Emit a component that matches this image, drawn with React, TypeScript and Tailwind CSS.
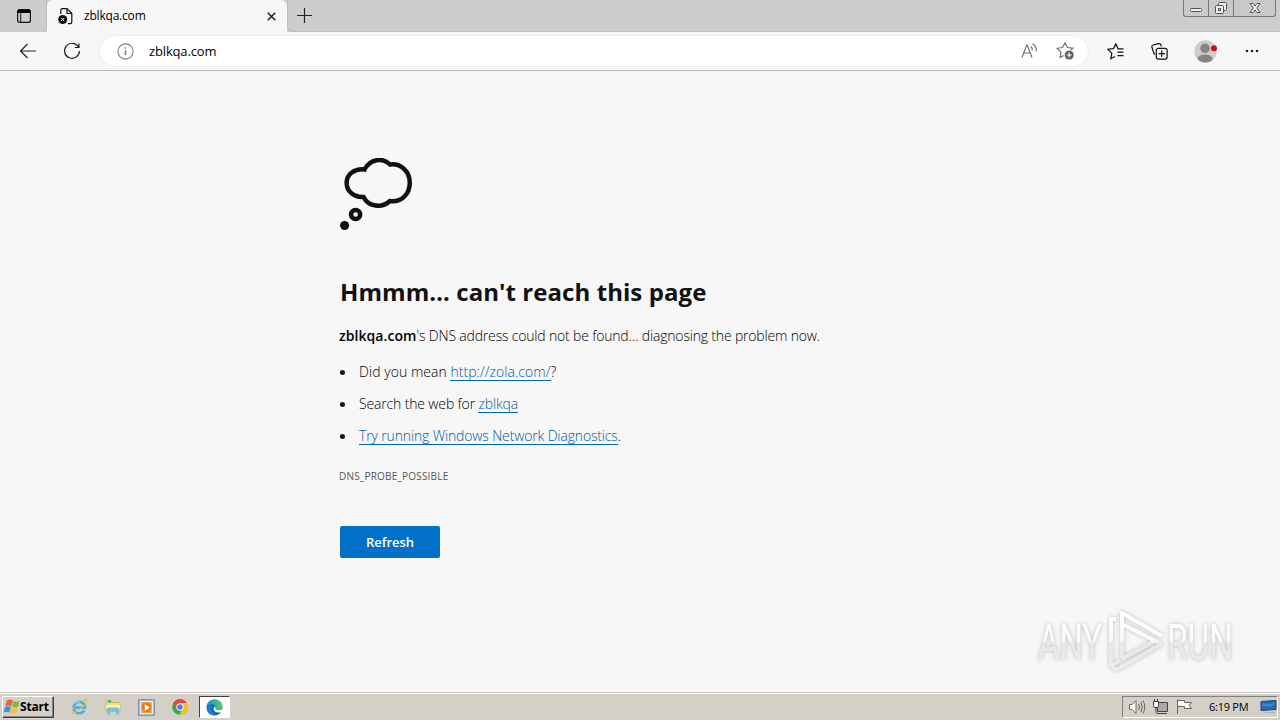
import React from 'react';

const BackIcon = () => (
  <svg width="18" height="16" viewBox="0 0 18 16" fill="none" stroke="#222" strokeWidth="1.2">
    <path d="M17 8H1.5M8.5 1 1.5 8l7 7" />
  </svg>
);

const ReloadIcon = () => (
  <svg width="18" height="18" viewBox="0 0 18 18" fill="none" stroke="#222" strokeWidth="1.2">
    <path d="M15.6 5.2A7.5 7.5 0 1 0 16.5 9M16 1.5v4h-4.2" />
  </svg>
);

const TabActionsIcon = () => (
  <svg width="14" height="14" viewBox="0 0 14 14">
    <rect x=".6" y=".6" width="12.8" height="12.8" rx="2" fill="none" stroke="#111" strokeWidth="1.2" />
    <path d="M.6 4V2.5Q.6.6 2.5.6h9q1.9 0 1.9 1.9V4z" fill="#000" />
    <path d="M3.7 4v9" stroke="#111" strokeWidth="1" />
  </svg>
);

const BrokenPageIcon = () => (
  <svg width="16" height="17" viewBox="0 0 16 17" fill="none">
    <path d="M2.8 6V2.3Q2.8.7 4.4.7H9l4.8 4.8v8.6q0 1.6-1.6 1.6H10M9 .7v4.8h4.8" stroke="#111" strokeWidth="1.2" />
    <circle cx="4.7" cy="11.5" r="4.5" fill="#111" />
    <path d="m3.2 10 3 3m0-3-3 3" stroke="#fff" strokeWidth="1" />
  </svg>
);

const InfoIcon = () => (
  <svg width="17" height="17" viewBox="0 0 17 17" fill="none" stroke="#808080">
    <circle cx="8.5" cy="8.5" r="7.6" strokeWidth="1.1" />
    <path d="M8.5 7.2v5M8.5 4.3v1.5" strokeWidth="1.5" />
  </svg>
);

const ReadAloudIcon = () => (
  <svg width="17" height="16" viewBox="0 0 17 16" fill="none" stroke="#6c6c6c" strokeWidth="1.1">
    <path d="M1 14.5 5.7 2h.5L11 14.5M2.8 10h6.4M9.8 3.5q1.7 1.4 1.5 4M11.4 .8q4.4 2.6 4 7.4" />
  </svg>
);

const AddFavoriteIcon = () => (
  <svg width="19" height="18" viewBox="0 0 19 18" fill="none" stroke="#686868" strokeWidth="1.1">
    <path d="M14.7 7.8 17 6.2l-5.5-.7L9 .9 6.5 5.5 1.2 6.3 5 10.1l-.9 5.5 3.7-2" />
    <circle cx="13.2" cy="13" r="4.5" fill="#5f5f5f" stroke="none" />
    <path d="M13.2 10.5v5M10.7 13h5" stroke="#fff" />
  </svg>
);

const FavoritesIcon = () => (
  <svg width="18" height="17" viewBox="0 0 18 17" fill="none" stroke="#111" strokeWidth="1.2">
    <path d="M12.8 5.8h-1.7L8.8.9 6.5 5.6.9 6.2l3.9 3.9-1 5.6 4-2.2M11 5.8h5.5M10.5 9.2h6M10.5 12.6h6" />
  </svg>
);

const CollectionsIcon = () => (
  <svg width="17" height="17" viewBox="0 0 17 17" fill="none" stroke="#111" strokeWidth="1.2">
    <path d="M4 11.5Q3 11 2.6 9.5L.9 4.1Q.5 2.4 2.2 2L7.8.7Q9.5.4 10 2l.3 1.5" />
    <rect x="5.3" y="5.3" width="10.8" height="10.8" rx="2" />
    <path d="M10.7 7.5v6.4M7.5 10.7h6.4" />
  </svg>
);

const ProfileIcon = () => (
  <svg width="23" height="23" viewBox="0 0 23 23">
    <defs>
      <clipPath id="avatar"><circle cx="11.5" cy="11.5" r="11" /></clipPath>
    </defs>
    <circle cx="11.5" cy="11.5" r="11.2" fill="#cfcdcb" />
    <g clipPath="url(#avatar)" fill="#858383">
      <circle cx="11" cy="8.3" r="4.8" />
      <ellipse cx="11" cy="18.8" rx="7.5" ry="4.3" />
    </g>
    <circle cx="20" cy="8.3" r="3" fill="#d80a17" />
  </svg>
);

const ThoughtIcon = () => (
  <svg width="74" height="74" viewBox="0 0 74 74" fill="none" stroke="#111" strokeWidth="4.5">
    <path d="M24.5 11.5C30 1-42.5 1 24.5 11.5Z" stroke="none" />
    <path d="M24.5 11.5C30 1 42.5-1 50 6.5 61 5 69.8 13.5 69.8 24.8 69.8 36.5 61 44.5 50 43 42 50.5 28.5 49 23.5 39 14 39.5 6.6 33.5 6.6 24.8 6.6 16 14.5 10.5 24.5 11.5Z" />
    <circle cx="15.6" cy="56.5" r="4.6" />
    <circle cx="4.6" cy="67.5" r="4.5" fill="#111" stroke="none" />
  </svg>
);

const WindowButtons = () => (
  <div className="flex h-[17px] w-[93px] rounded-b-[3px] border border-t-0 border-[#777] bg-[#c9c9c9]">
    <div className="flex w-[25px] justify-center border-r border-[#777]">
      <svg width="14" height="16" viewBox="0 0 14 16"><rect x="1.5" y="8.5" width="11" height="3" rx="1" fill="#eee" stroke="#555" /></svg>
    </div>
    <div className="flex w-[25px] justify-center border-r border-[#777]">
      <svg width="14" height="16" viewBox="0 0 14 16" fill="#eee" stroke="#555">
        <rect x="4.5" y="2.5" width="8" height="8" rx="1" />
        <rect x="1.5" y="5.5" width="8" height="8" rx="1" />
        <rect x="4.5" y="8.5" width="2" height="2" />
      </svg>
    </div>
    <div className="flex flex-1 justify-center">
      <svg width="14" height="16" viewBox="0 0 14 16"><path d="M2 3.5h3L7 6l2-2.5h3L8.8 8l3.2 4.5H9L7 10l-2 2.5H2L5.2 8z" fill="#eee" stroke="#555" /></svg>
    </div>
  </div>
);

const Watermark = () => (
  <div className="absolute left-[1036px] top-[606px] drop-shadow-[0_0_2px_rgba(0,0,0,0.24)]">
    <svg className="overflow-visible" width="204" height="74" viewBox="0 0 204 74" fill="none">
      <defs>
        <linearGradient id="mark" x1="0" y1="10" x2="0" y2="60" gradientUnits="userSpaceOnUse">
          <stop offset="0" stopColor="#fff" />
          <stop offset=".5" stopColor="#fafafa" />
          <stop offset=".54" stopColor="#e8e8e8" />
          <stop offset="1" stopColor="#ebebeb" />
        </linearGradient>
      </defs>
      <text x="2" y="54" textLength="64" lengthAdjust="spacingAndGlyphs" fill="url(#mark)" fontFamily="Roboto" fontSize="50">ANY</text>
      <text x="131" y="54" textLength="66" lengthAdjust="spacingAndGlyphs" fill="url(#mark)" fontFamily="Roboto" fontSize="50">RUN</text>
      <path d="M86 52V7l40 23M80 13h-5v46l9-4M86 18l39 20-45 26-5-5M86 53l33-18" stroke="url(#mark)" strokeWidth="3.8" strokeLinejoin="round" />
    </svg>
  </div>
);

const StartFlag = () => (
  <svg width="17" height="16" viewBox="0 0 17 16">
    <path d="M4 1.5q3-2 6 0L8.3 7.3q-3-1.8-6 0z" fill="#ed6332" />
    <path d="M10.8 1.8q2.6 1.7 5.7.2L15 7.7q-3 1.4-6-.1z" fill="#78b842" />
    <path d="M2 8.2q3-1.8 6 0l-1.6 5.5q-3-1.8-6 0z" fill="#3993dd" />
    <path d="M8.8 8.5q3 1.7 6 .2l-1.5 5.5q-3 1.4-6-.1z" fill="#f8bf37" />
  </svg>
);

const ExplorerIcon = () => (
  <svg width="18" height="18" viewBox="0 0 18 18" fill="none">
    <path d="M14.3 12.3A5.7 5.7 0 1 1 15 9.6H4" stroke="#4aaee6" strokeWidth="2.6" />
    <path d="M12 3.5q4.5-3.2 4.8-1Q16.5 6 10 11T2 15.5Q.8 13.5 4 9" stroke="#e6bd45" strokeWidth="1.2" />
    <path d="M4 6q2-3 6-2" stroke="#a5e0f7" />
  </svg>
);

const FolderIcon = () => (
  <svg width="18" height="18" viewBox="0 0 18 18">
    <path d="M2 2.5h5l1 2h8v9H2z" fill="#f2dc8a" stroke="#d2b75f" />
    <path d="M4 2h3v3H4z" fill="#63ae69" />
    <path d="M2 7h14v3H2z" fill="#fff0b4" />
    <path d="M3 16.5v-5q0-2 2-2h8q2 0 2 2v5h-3v-3.5H6v3.5z" fill="#79bfe2" />
  </svg>
);

const MediaIcon = () => (
  <svg width="17" height="17" viewBox="0 0 17 17">
    <rect x=".7" y=".7" width="15.6" height="15.6" fill="#a9d4ef" stroke="#6487aa" />
    <rect x="2.8" y="2.5" width="11.5" height="12" fill="#f9a23c" stroke="#e8f5fc" />
    <circle cx="8.5" cy="8.5" r="4.8" fill="#ee7710" />
    <path d="m6.8 5 5 3.5-5 3.5z" fill="#fff" />
  </svg>
);

const ChromeIcon = () => (
  <svg width="16" height="16" viewBox="0 0 16 16">
    <circle cx="8" cy="8" r="7.8" fill="#35a853" />
    <path d="M1.3 4A7.8 7.8 0 0 1 14.8 4H8L5 10z" fill="#e94435" />
    <path d="M14.8 4A7.8 7.8 0 0 1 7.5 15.8L11.3 8 9 4z" fill="#fbc116" />
    <circle cx="8" cy="8" r="3.7" fill="#fff" />
    <circle cx="8" cy="8" r="2.8" fill="#4285e8" />
  </svg>
);

const EdgeIcon = () => (
  <svg width="17" height="17" viewBox="0 0 17 17">
    <defs>
      <linearGradient id="edge" x1="0" x2="1">
        <stop stopColor="#168dd9" />
        <stop offset="1" stopColor="#58cf65" />
      </linearGradient>
    </defs>
    <circle cx="8.5" cy="8.5" r="8" fill="#126bb9" />
    <path d="M.5 8C1 2.8 4.6.5 8.5.5c4.7 0 8 3.3 8 6.5 0 3-2.2 4-4.6 4-2 0-2.6-.7-2.2-1.5C10.5 7 8.3 5.2 6 5.2 3.3 5.2 1.3 6.5.5 8z" fill="url(#edge)" />
    <path d="M9.7 9.6q-.8 1.6 2.2 1.7 2.5 0 4.8-1v2.5q-2.5 1.2-5.8.5Q7.7 12.5 7.6 9.5 8 7.2 9.3 7.8z" fill="#fff" />
    <path d="M1 8q2-2.8 5-1-2.5 3 .3 6.5 1.5 2 4 2.5Q2 18 1 8z" fill="#1a80cf" />
  </svg>
);

const TrayIcons = () => (
  <svg width="66" height="18" viewBox="0 0 66 18" fill="#fbfbf8" stroke="#666" strokeWidth="1">
    <path d="M1.5 6.5H4l4-4v13l-4-4H1.5z" />
    <path d="M10.5 6q2 3 0 6M12.8 4q3 5 0 10M15 2.5q3.5 6.5 0 13" fill="none" />
    <path d="M29.5 4.5h10v9h-10z" fill="#aaa" stroke="#444" />
    <path d="M31 15.5h8" stroke="#444" />
    <path d="M25.5 3.5h5v4q0 2-1.5 2h-2q-1.5 0-1.5-2zM26.5 1v3M29.5 1v3" stroke="#444" />
    <path d="M28 10v4q0 1.5 2 1.5h2" fill="none" stroke="#444" />
    <path d="M49.5 1.5v14.5M49.5 2.5h7v2h7l-2.5 3 2.5 3h-7v-2h-7z" />
  </svg>
);

const DesktopIcon = () => (
  <svg width="17" height="14" viewBox="0 0 17 14">
    <path d="M1 1.5 16 .5v9L1 10.5z" fill="#2769b3" stroke="#174878" />
    <path d="M2 3Q9 5.5 15 1.8v3Q9 8 2 5.5z" fill="#4284cb" />
    <path d="M5 12.5h10" stroke="#a6b7c7" strokeWidth="1.5" />
  </svg>
);

const linkClass = 'inline-block h-[17px] border-b border-[#0067b8] leading-[16px] text-[#005a9e]';

const suggestions = [
  { before: 'Did you mean ', link: 'http://zola.com/', after: '?', tracking: 'tracking-[0.04px]' },
  { before: 'Search the web for ', link: 'zblkqa', after: '', tracking: 'tracking-[-0.15px]' },
  { before: '', link: 'Try running Windows Network Diagnostics', after: '.', tracking: 'tracking-[-0.15px]' },
];

const App: React.FC = () => {
  return (
    <div className="relative flex h-[720px] w-[1280px] flex-col overflow-hidden bg-[#f7f7f7] font-['Open_Sans',sans-serif] text-[#111]">
      <header className="flex h-8 shrink-0 bg-[#cdcdcd]">
        <div className="flex w-[47px] items-center justify-center rounded-br-md border-r border-[#bcbcbc] pl-px">
          <TabActionsIcon />
        </div>
        <div className="flex w-[240px] items-center rounded-t-md bg-[#f7f7f7] pl-[11px] pr-[11px]">
          <BrokenPageIcon />
          <span className="ml-[9px] flex-1 pl-px text-[12px] tracking-[-0.2px] text-black">zblkqa.com</span>
          <svg width="9" height="9" viewBox="0 0 9 9" stroke="#222" strokeWidth="1.5"><path d="m.7.7 7.6 7.6m0-7.6L.7 8.3" /></svg>
        </div>
        <div className="flex flex-1 items-start rounded-bl-md border-b border-l border-[#bebebe] pl-[9px] pt-2">
          <svg width="15" height="15" viewBox="0 0 15 15" stroke="#222" strokeWidth="1.2"><path d="M7.5 0v15M0 7.5h15" /></svg>
        </div>
        <div className="w-[97px] border-b border-[#bebebe]"><WindowButtons /></div>
      </header>

      <nav className="flex h-[39px] shrink-0 items-center border-b border-[#b8b8b8] bg-[#f7f7f7]">
        <div className="ml-[19px] w-11"><BackIcon /></div>
        <div className="w-[37px]"><ReloadIcon /></div>
        <div className="flex h-[30px] w-[988px] items-center rounded-full bg-white pl-[17px] pr-[13px] shadow-[0_0_2px_#ddd]">
          <InfoIcon />
          <span className="ml-[15px] flex-1 pt-px text-[13px] tracking-[-0.15px] text-black">zblkqa.com</span>
          <div className="mr-[18px]"><ReadAloudIcon /></div>
          <AddFavoriteIcon />
        </div>
        <div className="ml-[19px] w-11"><FavoritesIcon /></div>
        <div className="w-[43px]"><CollectionsIcon /></div>
        <div className="w-[51px]"><ProfileIcon /></div>
        <svg width="14" height="4" viewBox="0 0 14 4" fill="#222"><circle cx="2" cy="2" r="1.3" /><circle cx="7" cy="2" r="1.3" /><circle cx="12" cy="2" r="1.3" /></svg>
      </nav>

      <main className="flex-1 pl-[340px] pt-[87px] text-[14px] text-black">
        <ThoughtIcon />
        <h1 className="mt-[42px] h-9 whitespace-nowrap text-[24px] font-bold leading-9 tracking-[0.07px] text-[#111]">Hmmm… can't reach this page</h1>
        <p className="-ml-px mt-[15px] h-[22px] whitespace-nowrap font-light leading-[22px] tracking-[-0.18px]"><b className="font-semibold tracking-[0.06px]">zblkqa.com</b>'s DNS address could not be found… diagnosing the problem now.</p>
        <ul className="mt-[9px] font-light leading-8">
          {suggestions.map(item => (
            <li key={item.link} className={`flex h-8 items-center whitespace-nowrap ${item.tracking}`}>
              <span className="mr-[14px] size-[5px] rounded-full bg-[#111]" />
              <span>{item.before}<a className={linkClass}>{item.link}</a>{item.after}</span>
            </li>
          ))}
        </ul>
        <p className="-ml-px mt-3.5 h-5 text-[10px] leading-5 tracking-[0.2px] text-[#555]">DNS_PROBE_POSSIBLE</p>
        <button className="mt-10 block h-8 w-[100px] rounded-[2px] bg-[#0070c9] pt-px text-[13px] font-semibold text-white">Refresh</button>
      </main>

      <Watermark />

      <footer className="flex h-7 shrink-0 items-center border-t border-[#c9c5bd] bg-[#d4d0c8] pt-px shadow-[inset_0_1px_#fff]">
        <button className="ml-0.5 flex h-[22px] w-[52px] items-center border border-white border-b-[#404040] border-r-[#404040] text-[12px] font-bold tracking-[-0.2px] text-black shadow-[inset_-1px_-1px_#808080]">
          <StartFlag />Start
        </button>
        <div className="ml-4 flex w-[129px] items-center">
          <ExplorerIcon />
          <div className="ml-4"><FolderIcon /></div>
          <div className="ml-4"><MediaIcon /></div>
          <div className="ml-[17px]"><ChromeIcon /></div>
        </div>
        <div className="flex h-[22px] w-[31px] items-center justify-center border border-[#404040] border-b-white border-r-white bg-white"><EdgeIcon /></div>
        <div className="ml-auto mr-0.5 flex h-[22px] w-[156px] items-center border border-[#808080] border-b-white border-r-white pl-[5px]">
          <TrayIcons />
          <span className="ml-[15px] w-[51px] whitespace-nowrap text-[11px] tracking-[-0.25px] text-black">6:19 PM</span>
          <DesktopIcon />
        </div>
      </footer>
    </div>
  );
};

export default App;
